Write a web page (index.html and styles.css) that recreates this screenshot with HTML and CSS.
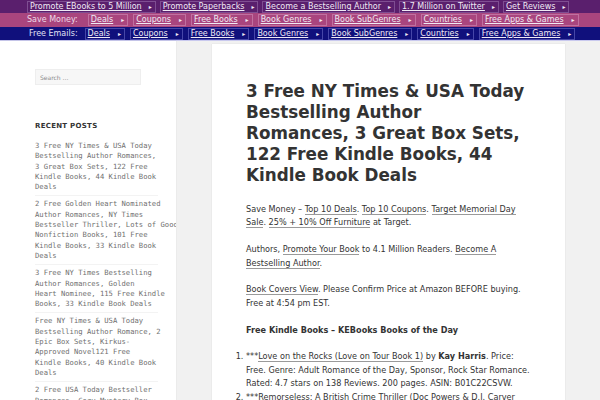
FILE: index.html
```html
<!doctype html>
<html>
<head>
<meta charset="UTF-8">
<title>Free Kindle Books | KEBooks</title>
<link rel="stylesheet" href="styles.css">
</head>
<body>

<div class="topnav">
  <div class="navrow row-promo">
    <span class="navbox"><a href="#">Promote EBooks to 5 Million</a><span class="arr">&#9656;</span></span>
    <span class="navbox"><a href="#">Promote Paperbacks</a><span class="arr">&#9656;</span></span>
    <span class="navbox"><a href="#">Become a Bestselling Author</a><span class="arr">&#9656;</span></span>
    <span class="navbox"><a href="#">1.7 Million on Twitter</a><span class="arr">&#9656;</span></span>
    <span class="navbox"><a href="#">Get Reviews</a><span class="arr">&#9656;</span></span>
  </div>
  <div class="navrow row-save">
    <span class="navlabel">Save Money:</span>
    <span class="navbox"><a href="#">Deals</a><span class="arr">&#9656;</span></span>
    <span class="navbox"><a href="#">Coupons</a><span class="arr">&#9656;</span></span>
    <span class="navbox"><a href="#">Free Books</a><span class="arr">&#9656;</span></span>
    <span class="navbox"><a href="#">Book Genres</a><span class="arr">&#9656;</span></span>
    <span class="navbox"><a href="#">Book SubGenres</a><span class="arr">&#9656;</span></span>
    <span class="navbox"><a href="#">Countries</a><span class="arr">&#9656;</span></span>
    <span class="navbox"><a href="#">Free Apps &amp; Games</a><span class="arr">&#9656;</span></span>
  </div>
  <div class="navrow row-email">
    <span class="navlabel">Free Emails:</span>
    <span class="navbox"><a href="#">Deals</a><span class="arr">&#9656;</span></span>
    <span class="navbox"><a href="#">Coupons</a><span class="arr">&#9656;</span></span>
    <span class="navbox"><a href="#">Free Books</a><span class="arr">&#9656;</span></span>
    <span class="navbox"><a href="#">Book Genres</a><span class="arr">&#9656;</span></span>
    <span class="navbox"><a href="#">Book SubGenres</a><span class="arr">&#9656;</span></span>
    <span class="navbox"><a href="#">Countries</a><span class="arr">&#9656;</span></span>
    <span class="navbox"><a href="#">Free Apps &amp; Games</a><span class="arr">&#9656;</span></span>
  </div>
</div>

<div class="site">

  <aside class="sidebar">
    <form class="search-form">
      <input class="search-field" type="search" placeholder="Search &hellip;">
    </form>

    <h2 class="widget-title">Recent Posts</h2>
    <ul class="recent-posts">
      <li><a href="#">3 Free NY Times &amp; USA Today<br>Bestselling Author Romances,<br>3 Great Box Sets, 122 Free<br>Kindle Books, 44 Kindle Book<br>Deals</a></li>
      <li><a href="#">2 Free Golden Heart Nominated<br>Author Romances, NY Times<br>Bestseller Thriller, Lots of Good<br>Nonfiction Books, 101 Free<br>Kindle Books, 33 Kindle Book<br>Deals</a></li>
      <li><a href="#">3 Free NY Times Bestselling<br>Author Romances, Golden<br>Heart Nominee, 115 Free Kindle<br>Books, 33 Kindle Book Deals</a></li>
      <li><a href="#">Free NY Times &amp; USA Today<br>Bestselling Author Romance, 2<br>Epic Box Sets, Kirkus-<br>Approved Novel121 Free<br>Kindle Books, 40 Kindle Book<br>Deals</a></li>
      <li><a href="#">2 Free USA Today Bestseller<br>Romances, Cozy Mystery Box<br>Sets</a></li>
    </ul>
  </aside>

  <main class="content">
    <article class="post">
      <h1 class="entry-title">3 Free NY Times &amp; USA Today Bestselling Author Romances, 3 Great Box Sets, 122 Free Kindle Books, 44 Kindle Book Deals</h1>

      <div class="entry-content">
        <p>Save Money &ndash; <a href="#">Top 10 Deals</a>. <a href="#">Top 10 Coupons</a>. <a href="#">Target Memorial Day Sale</a>. <a href="#">25% + 10% Off Furniture</a> at Target.</p>
        <p>Authors, <a href="#">Promote Your Book</a> to 4.1 Million Readers. <a href="#">Become A Bestselling Author</a>.</p>
        <p><a href="#">Book Covers View</a>. Please Confirm Price at Amazon BEFORE buying. Free at 4:54 pm EST.</p>
        <p><strong>Free Kindle Books &ndash; KEBooks Books of the Day</strong></p>
        <ol>
          <li>***<a href="#">Love on the Rocks (Love on Tour Book 1)</a> by <strong>Kay Harris</strong>. Price: Free. Genre: Adult Romance of the Day, Sponsor, Rock Star Romance. Rated: 4.7 stars on 138 Reviews. 200 pages. ASIN: B01C22CSVW.</li>
          <li>***<a href="#">Remorseless: A British Crime Thriller (Doc Powers &amp; D.J. Carver Book 1)</a> by <strong>Daniel Carver</strong>. Price: Free. Genre: Crime Thriller.</li>
        </ol>
      </div>
    </article>
  </main>

</div>

</body>
</html>
```

FILE: styles.css
```css
body {
	margin: 0;
	background-color: #f1f1f1;
	color: #333333;
	font-family: "DejaVu Sans", sans-serif;
	overflow: hidden;
}

/* top menu bars */
.topnav {
	border-bottom: 1px solid #c9c9ee;
}

.navrow {
	display: flex;
	align-items: center;
	gap: 4px;
	height: 13px;
	padding-left: 27px;
	font-size: 8px;
	line-height: 10px;
	white-space: nowrap;
}

.row-promo {
	background-color: #5a1f6d;
}

.row-save {
	background-color: #a9457e;
	height: 14px;
	gap: 5px;
}

.row-email {
	background-color: #10107c;
	padding-left: 29px;
	gap: 5px;
}

.navlabel {
	color: #ecd9e6;
	margin-right: 5px;
}

.row-email .navlabel {
	color: #e2e2f4;
	margin-right: 2px;
}

.navbox {
	display: inline-flex;
	align-items: center;
	padding: 0 3px 0 2px;
	border: 1px solid #7f4e92;
}

.row-save .navbox {
	border-color: #c070a0;
}

.row-email .navbox {
	border-color: #4646a8;
}

.navbox a {
	color: #f0eaf4;
	text-decoration: underline;
}

.arr {
	color: #f0eaf4;
	font-size: 6px;
	margin-left: 7px;
}

.row-save .arr,
.row-email .arr {
	margin-left: 8px;
}

/* page */
.site {
	display: flex;
	align-items: flex-start;
}

.sidebar {
	width: 141px;
	min-height: 360px;
	padding: 28px 0 0 35px;
	background-color: #ffffff;
	box-shadow: 0 0 1px rgba(0, 0, 0, 0.15);
	overflow: hidden;
}

.search-field {
	display: block;
	box-sizing: border-box;
	width: 106px;
	height: 16px;
	margin: 0;
	padding: 0 4px;
	border: 1px solid #eeeeee;
	background-color: #f7f7f7;
	font-family: "DejaVu Sans", sans-serif;
	font-size: 6px;
	color: #707070;
}

.search-field::placeholder {
	color: #8a8a8a;
}

.widget-title {
	margin: 36px 0 10px;
	font-size: 7px;
	line-height: 10px;
	letter-spacing: 0.04em;
	text-transform: uppercase;
	font-weight: bold;
	color: #333333;
}

.recent-posts {
	list-style: none;
	margin: 0;
	padding: 0;
	width: 123px;
}

.recent-posts li {
	padding: 3px 0 3px;
	border-top: 1px solid #f3f3f3;
	font-family: "DejaVu Sans Mono", monospace;
	font-size: 7.2px;
	line-height: 10.3px;
	white-space: nowrap;
}

.recent-posts li:first-child {
	border-top: 0;
	padding-top: 0;
}

.recent-posts a {
	color: #707070;
	text-decoration: none;
}

.content {
	width: 285px;
	margin: 3px 0 0 36px;
	padding: 37px 34px 0 34px;
	background-color: #ffffff;
	min-height: 400px;
	box-shadow: 0 0 1px rgba(0, 0, 0, 0.15);
}

.entry-title {
	width: 282.5px;
	margin: 0 0 17px;
	font-size: 16.8px;
	line-height: 21px;
	font-weight: bold;
	color: #333333;
}

.entry-content {
	font-size: 8.15px;
	line-height: 13.4px;
}

.entry-content p {
	margin: 0 0 13.4px;
}

.entry-content a {
	color: #333333;
	text-decoration: none;
	border-bottom: 1px solid #9a9a9a;
}

.entry-content ol {
	margin: 0;
	padding: 0;
}
```
